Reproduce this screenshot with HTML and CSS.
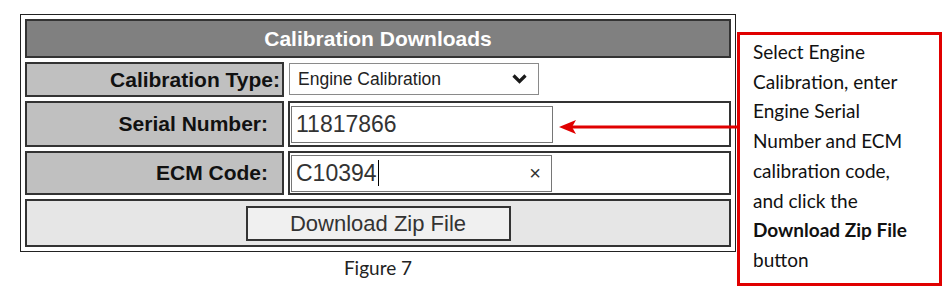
FILE: index.html
```html
<!DOCTYPE html>
<html lang="en">
<head>
    <meta charset="UTF-8">
    <meta name="viewport" content="width=device-width, initial-scale=1.0">
    <title>Calibration Downloads</title>
    <link rel="stylesheet" href="styles.css">
</head>
<body>
    <div class="page">
        <div class="figure">
            <table class="calib">
                <colgroup>
                    <col class="col-label">
                    <col class="col-value">
                </colgroup>
                <tr class="row-title">
                    <th colspan="2" class="title">Calibration Downloads</th>
                </tr>
                <tr class="row-type">
                    <th class="label label-wide">Calibration Type:</th>
                    <td class="value plain">
                        <div class="select-wrap">
                            <select class="select">
                                <option>Engine Calibration</option>
                            </select>
                            <svg class="chevron" width="15" height="10" viewBox="0 0 15 10">
                                <path d="M1.5 1.5 L7.5 7.5 L13.5 1.5" fill="none" stroke="#1a1a1a" stroke-width="3.2"/>
                            </svg>
                        </div>
                    </td>
                </tr>
                <tr class="row-serial">
                    <th class="label">Serial Number:</th>
                    <td class="value">
                        <input class="text-field" type="text" value="11817866">
                    </td>
                </tr>
                <tr class="row-ecm">
                    <th class="label">ECM Code:</th>
                    <td class="value">
                        <div class="text-field search">
                            <span>C10394</span><span class="caret"></span>
                            <span class="clear">&times;</span>
                        </div>
                    </td>
                </tr>
                <tr class="row-actions">
                    <td colspan="2" class="actions">
                        <button class="download">Download Zip File</button>
                    </td>
                </tr>
            </table>
            <p class="caption">Figure 7</p>
        </div>

        <div class="callout">
            <svg class="arrow" width="181" height="16" viewBox="0 0 181 16">
                <polygon points="0,8 17,1 13,8 17,15" fill="#e00000"/>
                <rect x="12" y="6.5" width="169" height="3" fill="#e00000"/>
            </svg>
            <p>Select Engine<br>Calibration, enter<br>Engine Serial<br>Number and ECM<br>calibration code,<br>and click the<br><b>Download Zip File</b><br>button</p>
        </div>
    </div>
</body>
</html>
```

FILE: styles.css
```css
body {
    margin: 0;
    background: #fff;
    font-family: "Liberation Sans", Arial, sans-serif;
}

.page {
    display: flex;
    align-items: flex-start;
    padding: 14px 0 0 20px;
}

.figure {
    width: 716px;
}

/* form table */
.calib {
    width: 716px;
    table-layout: fixed;
    border: 1px solid #222;
    border-spacing: 4px;
}

.col-label {
    width: 259px;
}

.calib th,
.calib td {
    border: 2px solid #333;
    padding: 0;
}

.title {
    height: 35px;
    background: #808080;
    color: #fff;
    font-size: 21px;
    font-weight: bold;
    text-align: center;
}

.label {
    background: #c0c0c0;
    color: #111;
    font-size: 21px;
    font-weight: bold;
    text-align: right;
    padding-right: 14px !important;
}

.label-wide {
    padding-right: 2px !important;
}

.row-type th {
    height: 31px;
}

.row-serial th {
    height: 42px;
}

.row-ecm th {
    height: 40px;
}

.value {
    background: #fff;
    vertical-align: middle;
}

.value.plain {
    border-color: #fff;
    vertical-align: top;
}

.select-wrap {
    position: relative;
    width: 250px;
    margin: -1px 0 0 -1px;
}

.select {
    appearance: none;
    -webkit-appearance: none;
    display: block;
    width: 250px;
    height: 32px;
    margin: 0;
    padding: 0 0 0 8px;
    border: 1px solid #8a8a8a;
    border-radius: 0;
    background: #fff;
    color: #222;
    font-family: "Liberation Sans", Arial, sans-serif;
    font-size: 17.5px;
}

.chevron {
    position: absolute;
    right: 12px;
    top: 11px;
}

.text-field {
    box-sizing: border-box;
    display: flex;
    align-items: center;
    width: 262px;
    height: 37px;
    margin: 0 0 0 1px;
    padding: 0 0 0 4px;
    border: 1px solid #767676;
    border-radius: 0;
    background: #fff;
    color: #333;
    font-family: "Liberation Sans", Arial, sans-serif;
    font-size: 23px;
}

.search {
    width: 261px;
}

.caret {
    display: inline-block;
    width: 1px;
    height: 26px;
    margin-left: 1px;
    background: #000;
}

.clear {
    margin-left: auto;
    margin-right: 10px;
    color: #333;
    font-size: 20px;
}

.actions {
    height: 44px;
    background: #e6e6e6;
    text-align: center;
    vertical-align: middle;
}

.download {
    width: 265px;
    height: 35px;
    margin-top: 1px;
    padding: 0;
    border: 2px solid #333;
    border-radius: 0;
    background: #f0f0f0;
    color: #333;
    font-family: "Liberation Sans", Arial, sans-serif;
    font-size: 22px;
}

.caption {
    margin: 4px 0 0;
    text-align: center;
    font-family: Lato, "Open Sans", sans-serif;
    font-size: 19px;
    color: #222;
}

/* annotation */
.callout {
    position: relative;
    box-sizing: border-box;
    width: 205px;
    height: 254px;
    margin: 18px 0 0 1px;
    padding: 2px 6px 0 13px;
    border: 3px solid #e00000;
}

.callout p {
    margin: 0;
    font-family: Lato, "Open Sans", sans-serif;
    font-size: 19px;
    line-height: 29.7px;
    color: #111;
}

.arrow {
    position: absolute;
    left: -181px;
    top: 84px;
}
```
